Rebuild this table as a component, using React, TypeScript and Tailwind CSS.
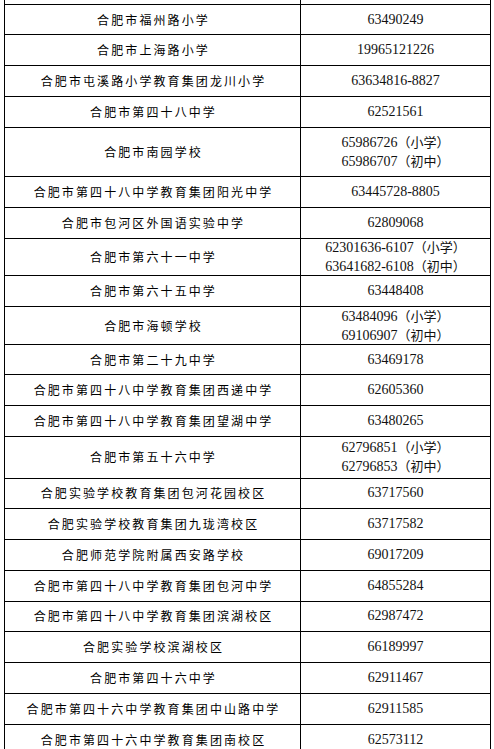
const CJK = "font-['Noto_Sans_CJK_SC','Noto_Sans_CJK_JP',sans-serif]"

interface Row {
  name: string
  phones: string[][] // [number, note]
  h: string
}

const ROWS: Row[] = [
  { name: '合肥市福州路小学', phones: [['63490249', '']], h: 'h-[31.3px] border-t' },
  { name: '合肥市上海路小学', phones: [['19965121226', '']], h: 'h-[31px]' },
  { name: '合肥市屯溪路小学教育集团龙川小学', phones: [['63634816-8827', '']], h: 'h-[31px]' },
  { name: '合肥市第四十八中学', phones: [['62521561', '']], h: 'h-[31px]' },
  { name: '合肥市南园学校', phones: [['65986726', '（小学）'], ['65986707', '（初中）']], h: 'h-[48.7px]' },
  { name: '合肥市第四十八中学教育集团阳光中学', phones: [['63445728-8805', '']], h: 'h-[30.7px]' },
  { name: '合肥市包河区外国语实验中学', phones: [['62809068', '']], h: 'h-[31px]' },
  { name: '合肥市第六十一中学', phones: [['62301636-6107', '（小学）'], ['63641682-6108', '（初中）']], h: 'h-[37.5px]' },
  { name: '合肥市第六十五中学', phones: [['63448408', '']], h: 'h-[31.3px]' },
  { name: '合肥市海顿学校', phones: [['63484096', '（小学）'], ['69106907', '（初中）']], h: 'h-[37.3px]' },
  { name: '合肥市第二十九中学', phones: [['63469178', '']], h: 'h-[30.7px]' },
  { name: '合肥市第四十八中学教育集团西递中学', phones: [['62605360', '']], h: 'h-[31px]' },
  { name: '合肥市第四十八中学教育集团望湖中学', phones: [['63480265', '']], h: 'h-[30.8px]' },
  { name: '合肥市第五十六中学', phones: [['62796851', '（小学）'], ['62796853', '（初中）']], h: 'h-[41.4px]' },
  { name: '合肥实验学校教育集团包河花园校区', phones: [['63717560', '']], h: 'h-[30.6px]' },
  { name: '合肥实验学校教育集团九珑湾校区', phones: [['63717582', '']], h: 'h-[31px]' },
  { name: '合肥师范学院附属西安路学校', phones: [['69017209', '']], h: 'h-[30.7px]' },
  { name: '合肥市第四十八中学教育集团包河中学', phones: [['64855284', '']], h: 'h-[30.7px]' },
  { name: '合肥市第四十八中学教育集团滨湖校区', phones: [['62987472', '']], h: 'h-[30.6px]' },
  { name: '合肥实验学校滨湖校区', phones: [['66189997', '']], h: 'h-[31px]' },
  { name: '合肥市第四十六中学', phones: [['62911467', '']], h: 'h-[31px]' },
  { name: '合肥市第四十六中学教育集团中山路中学', phones: [['62911585', '']], h: 'h-[31px]' },
  { name: '合肥市第四十六中学教育集团南校区', phones: [['62573112', '']], h: 'h-[31px]' },
]

export default function App() {
  return (
    <div className="w-[494px] h-[749px] overflow-hidden bg-white">
      <div className="ml-[4px] w-[487px]">
        {/* sliver of the row above */}
        <div className="flex h-[4px] border-l border-r border-black">
          <div className="w-[296px] border-r border-black" />
          <div className="flex-1" />
        </div>
        {ROWS.map(row => (
          <div
            key={row.name}
            className={`flex border-l border-r border-b border-black ${row.h}`}
          >
            <div className="w-[296px] shrink-0 border-r border-black flex items-center justify-center">
              <span
                className={`${CJK} text-[12px] leading-[18px] tracking-[2.1px] text-black pl-[2px]`}
              >
                {row.name}
              </span>
            </div>
            <div className="flex-1 flex flex-col items-center justify-center">
              {row.phones.map(([num, note]) => (
                <div key={num} className="flex items-baseline leading-[18px] whitespace-nowrap">
                  <span className="font-['Liberation_Serif',serif] text-[14px] text-[#111]">{num}</span>
                  {note && (
                    <span className={`${CJK} text-[13px] text-[#111]`}>{note}</span>
                  )}
                </div>
              ))}
            </div>
          </div>
        ))}
      </div>
    </div>
  )
}
